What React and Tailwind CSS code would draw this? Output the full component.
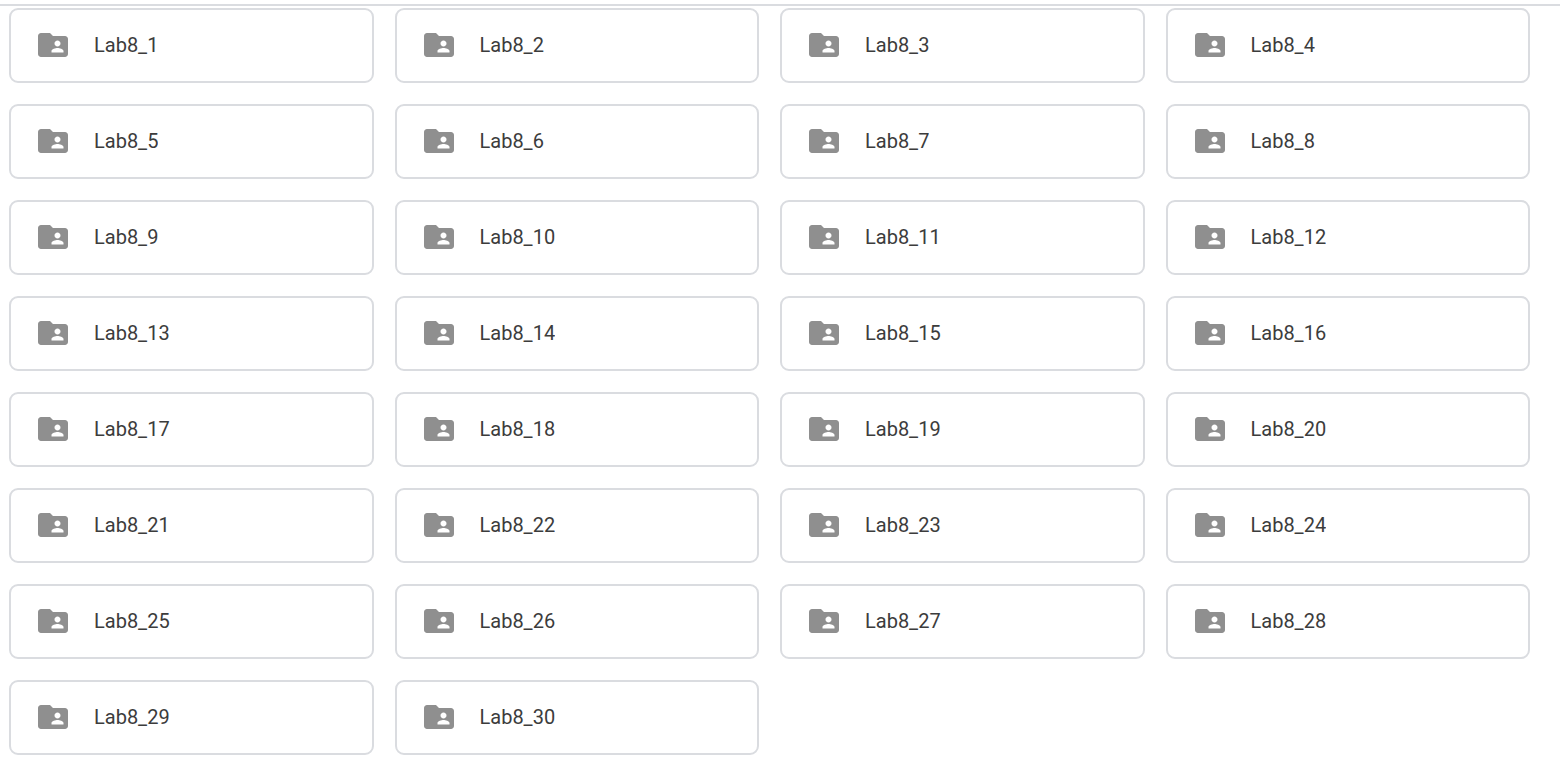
import { MdFolderShared } from "react-icons/md";

const folders = Array.from({ length: 30 }, (_, i) => `Lab8_${i + 1}`);

function FolderCard({ name }) {
  return (
    <li>
      <button
        type="button"
        className="flex h-[75px] w-full items-center gap-[23px] rounded-[9px] border-2 border-[#dadce0] bg-white px-6 pb-px text-left"
      >
        <MdFolderShared className="size-9 shrink-0 text-[#8f8f8f]" aria-hidden="true" />
        <span className="truncate text-[20px] leading-6 font-normal text-[#3c3c3c]">{name}</span>
      </button>
    </li>
  );
}

export default function App() {
  return (
    <main className="min-h-screen bg-white pt-1 font-['Roboto',sans-serif]">
      <div className="border-t-2 border-[#dadce0] pt-0.5">
        <ul className="grid grid-cols-4 gap-[21px] pr-[30px] pl-[9px]">
          {folders.map((name) => (
            <FolderCard key={name} name={name} />
          ))}
        </ul>
      </div>
    </main>
  );
}
